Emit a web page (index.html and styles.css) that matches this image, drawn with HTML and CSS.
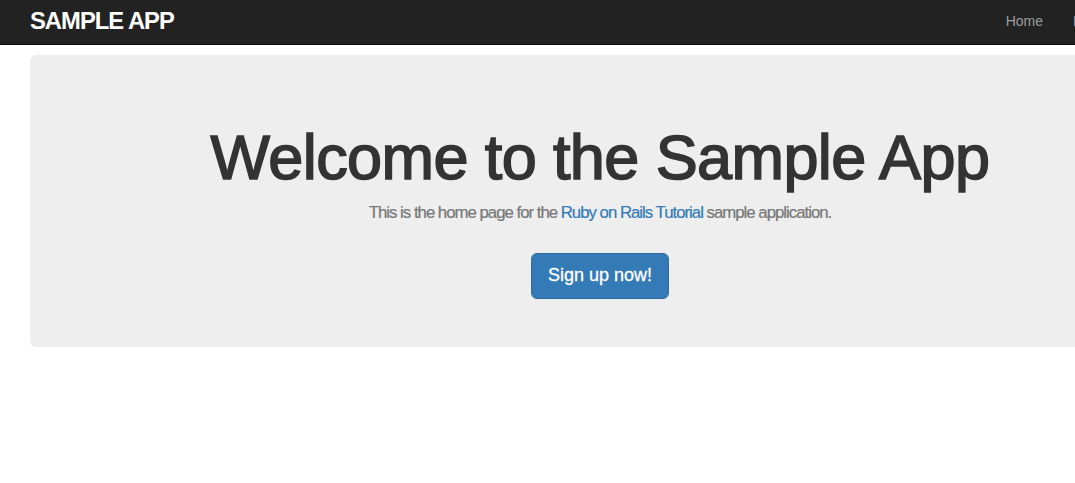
FILE: index.html
```html
<!doctype html>
<html>
    <head>
        <title>Sample App</title>
        <meta charset="utf-8">
        <link rel="stylesheet" href="styles.css">
    </head>
    <body>
        <div class="navbar">
            <div class="container nav-inner">
                <a class="logo" href="#">Sample App</a>
                <ul class="nav-links">
                    <li><a href="#">Home</a></li>
                    <li><a href="#">Help</a></li>
                    <li><a href="#">Log in</a></li>
                </ul>
            </div>
        </div>
        <div class="container">
            <div class="jumbotron">
                <h1>Welcome to the Sample App</h1>
                <h2>
                    This is the home page for the
                    <a href="#">Ruby on Rails Tutorial</a>
                    sample application.
                </h2>
                <a class="btn" href="#">Sign up now!</a>
            </div>
        </div>
    </body>
</html>
```

FILE: styles.css
```css
html, body {
    margin: 0;
    overflow: hidden;
}
body {
    font-family: "Liberation Sans", Arial, sans-serif;
    font-size: 14px;
    line-height: 1.42857;
    color: #333333;
    background-color: #FFFFFF;
}
a {
    color: #337AB7;
    text-decoration: none;
}
.container {
    box-sizing: border-box;
    width: 1170px;
    margin-left: 15px;
    padding: 0px 15px;
}
.navbar {
    width: 1200px;
    height: 44px;
    border-bottom: 1px solid #080808;
    background-color: #222222;
}
.nav-inner {
    display: flex;
    align-items: center;
    height: 44px;
}
.logo {
    font-size: 23.8px;
    font-weight: bold;
    letter-spacing: -1px;
    text-transform: uppercase;
    color: #FFFFFF;
    margin-top: -2px;
}
.nav-links {
    display: flex;
    margin: 0px -15px 0px auto;
    padding: 0px;
    list-style: none;
}
.nav-links a {
    display: block;
    padding: 10px 15px;
    color: #9D9D9D;
}
.jumbotron {
    margin-top: 10px;
    padding: 48px 60px;
    border-radius: 6px;
    background-color: #EEEEEE;
    text-align: center;
}
h1 {
    margin: 20px 0px 12px;
    font-size: 63px;
    font-weight: normal;
    line-height: 1.1;
    letter-spacing: -0.6px;
    color: #333333;
    -webkit-text-stroke: 1.6px #333333;
}
h2 {
    margin: 0px 0px 30px;
    font-size: 16.8px;
    font-weight: normal;
    line-height: 1.1;
    letter-spacing: -1px;
    color: #777777;
    -webkit-text-stroke: 0.2px #777777;
}
h2 a {
    -webkit-text-stroke: 0.2px #337AB7;
}
.btn {
    display: inline-block;
    padding: 10px 16px;
    border: 1px solid #2E6DA4;
    border-radius: 6px;
    background-color: #337AB7;
    font-size: 18px;
    line-height: 1.33333;
    color: #FFFFFF;
    -webkit-text-stroke: 0.3px #FFFFFF;
}
```
